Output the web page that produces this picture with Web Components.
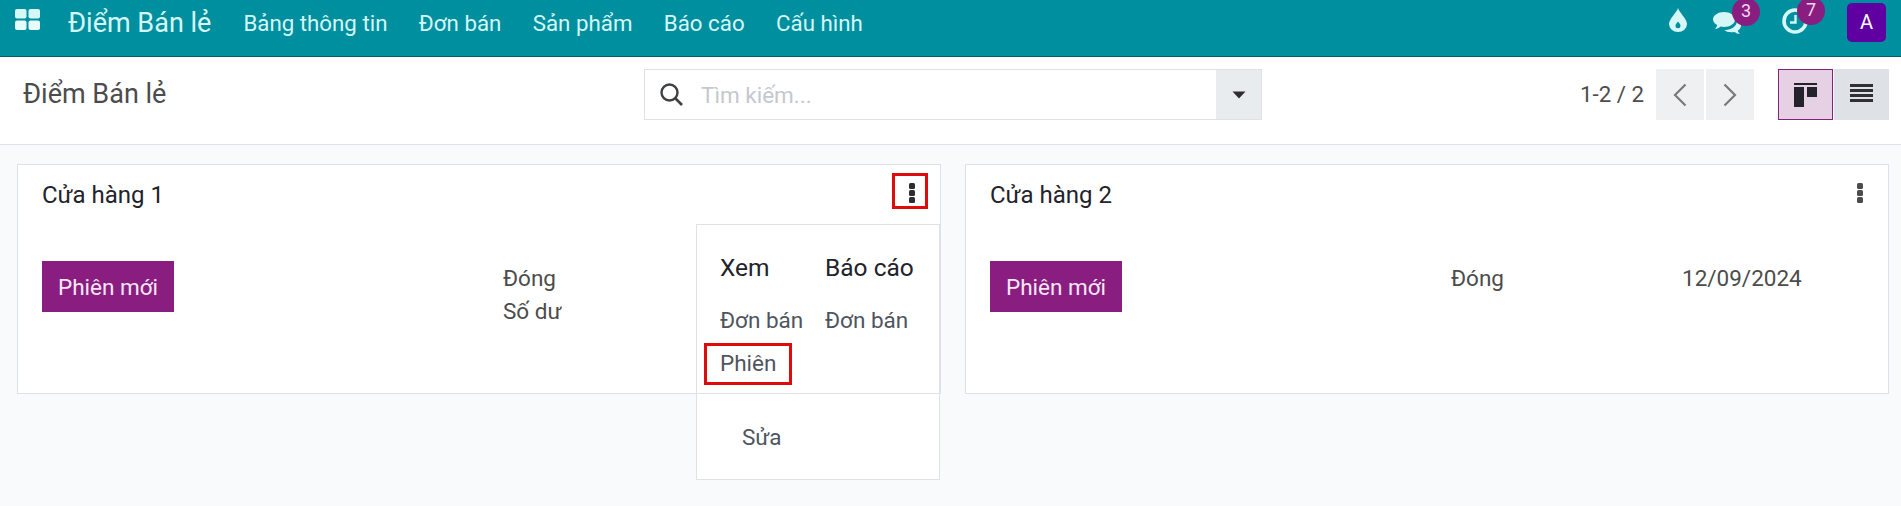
<!DOCTYPE html>
<html lang="vi">
<head>
<meta charset="utf-8">
<title>Điểm Bán lẻ</title>
<style>
html, body { margin: 0; height: 100%; }
body {
    background: #f9fafb;
    font-family: Roboto, "Noto Sans", sans-serif;
    color: #4c4c4c;
    overflow: hidden;
}
</style>
</head>
<body>
<app-navbar></app-navbar>
<control-panel></control-panel>
<kanban-board>
    <pos-card name="Cửa hàng 1" status="Đóng" balance="Số dư" open></pos-card>
    <pos-card name="Cửa hàng 2" status="Đóng" date="12/09/2024"></pos-card>
</kanban-board>

<script>
class AppNavbar extends HTMLElement {
    constructor(){
        super();
        this.attachShadow({mode: "open"});
        this.shadowRoot.innerHTML = `
<style>
:host{
    display: flex;
    height: 46px;
    padding: 0 15px 10px 15px;
    border-bottom: 1px solid #006068;
    background: #008f9e;
    color: #d5f7f7;
    font-size: 22.3px;
    align-items: center;
}
.apps{ width: 25px; height: 21px; align-self: flex-start; margin-top: 9px; }
.brand{ font-size: 27px; margin-left: 28px; margin-right: 32px; }
nav{ display: flex; gap: 31.4px; flex: 1; }
.systray{ display: flex; align-items: flex-start; height: 100%; }
.item{ position: relative; display: flex; }
.badge{
    position: absolute;
    width: 28px; height: 28px;
    border-radius: 50%;
    background: #8a1e80;
    color: #f3d6ee;
    font-size: 18px;
    line-height: 26px;
    text-align: center;
}
.avatar{
    width: 39px; height: 39px;
    margin-top: 3px;
    border-radius: 5px;
    background: #5f00a3;
    color: #fff;
    font-size: 20px;
    line-height: 39px;
    text-align: center;
}
</style>
<svg class="apps" viewBox="0 0 25 21">
    <rect x="0" y="0" width="11.5" height="9.5" rx="2" fill="#d5f7f7"/>
    <rect x="13.5" y="0" width="11.5" height="9.5" rx="2" fill="#d5f7f7"/>
    <rect x="0" y="11.5" width="11.5" height="9.5" rx="2" fill="#e8fbfb"/>
    <rect x="13.5" y="11.5" width="11.5" height="9.5" rx="2" fill="#e8fbfb"/>
</svg>
<span class="brand">Điểm Bán lẻ</span>
<nav>
    <span>Bảng thông tin</span>
    <span>Đơn bán</span>
    <span>Sản phẩm</span>
    <span>Báo cáo</span>
    <span>Cấu hình</span>
</nav>
<div class="systray">
    <div class="item" style="margin:8px 26px 0 0">
        <svg width="18" height="24" viewBox="0 0 18 24">
            <path fill-rule="evenodd" fill="#d5f7f7" d="M9 0C10 4 18 11 18 16A9 8 0 0 1 0 16C0 11 8 4 9 0ZM9 13.5C7.6 15.3 6.5 16.4 6.5 17.8A2.5 2.5 0 0 0 11.5 17.8C11.5 16.4 10.4 15.3 9 13.5Z"/>
        </svg>
    </div>
    <div class="item" style="margin:11px 41px 0 0">
        <svg width="28" height="23" viewBox="0 0 28 23">
            <path fill="#d5f7f7" d="M11 1C17 1 22 4.3 22 8.5C22 12.7 17 16 11 16C9.8 16 8.7 15.9 7.6 15.6C6 17 4 17.8 2 18C3.2 16.8 4 15.5 4.2 14C1.7 12.7 0 10.7 0 8.5C0 4.3 5 1 11 1Z"/>
            <path fill="#d5f7f7" d="M24 9.5C26.4 10.8 28 12.6 28 14.8C28 16.7 26.8 18.3 24.9 19.5C25 20.7 25.7 21.8 27 23C24.8 22.8 23 22 21.7 20.9C20.6 21.1 19.5 21.2 18.3 21.2C15.5 21.2 13 20.5 11.2 19.2C17.5 19.2 24 15.8 24 9.5Z"/>
        </svg>
        <span class="badge" style="left:19px;top:-13px">3</span>
    </div>
    <div class="item" style="margin:8px 39px 0 0">
        <svg width="26" height="26" viewBox="0 0 26 26">
            <circle cx="13" cy="13" r="11" fill="none" stroke="#d5f7f7" stroke-width="3.6"/>
            <path d="M13.5 7V14.5H8" fill="none" stroke="#d5f7f7" stroke-width="2.4"/>
        </svg>
        <span class="badge" style="left:15px;top:-11px">7</span>
    </div>
    <div class="avatar">A</div>
</div>`;
    }
}

class SearchBox extends HTMLElement {
    constructor(){
        super();
        this.attachShadow({mode: "open"});
        this.shadowRoot.innerHTML = `
<style>
:host{
    display: flex;
    width: 618px;
    height: 51px;
    box-sizing: border-box;
    border: 1px solid #dee2e6;
    background: #fff;
    align-items: center;
}
svg.search{ width: 23px; height: 23px; margin-left: 15px; }
.placeholder{ flex: 1; margin-left: 18px; font-size: 22.5px; color: #c4c8cf; }
.toggle{
    width: 45px;
    height: 100%;
    background: #e9ecef;
    display: flex;
    align-items: center;
    justify-content: center;
}
</style>
<svg class="search" viewBox="0 0 23 23">
    <circle cx="9.5" cy="9.5" r="8" fill="none" stroke="#3f4144" stroke-width="2.4"/>
    <path d="M15 15L22 22" stroke="#3f4144" stroke-width="2.6"/>
</svg>
<span class="placeholder">Tìm kiếm...</span>
<div class="toggle">
    <svg width="14" height="8" viewBox="0 0 14 8"><path d="M0.5 0.5H13.5L7 7.5Z" fill="#2b2d33"/></svg>
</div>`;
    }
}

class ControlPanel extends HTMLElement {
    constructor(){
        super();
        this.attachShadow({mode: "open"});
        this.shadowRoot.innerHTML = `
<style>
:host{
    display: flex;
    height: 88px;
    box-sizing: border-box;
    background: #fff;
    border-bottom: 1px solid #dee2e6;
    padding: 12px 12px 0 23px;
    align-items: flex-start;
    color: #4c4c4c;
}
.title{ width: 621px; font-size: 27px; line-height: 50px; }
.pager{ font-size: 22.3px; line-height: 51px; margin-left: auto; margin-right: 12px; }
.nav-btn, .view-btn{
    height: 51px;
    box-sizing: border-box;
    display: flex;
    align-items: center;
    justify-content: center;
}
.nav-btn{ width: 48px; background: #eff0f1; margin-right: 2px; }
.view-btn{ width: 55px; background: #dee2e6; }
.view-btn.active{ background: #e6d0e4; border: 1px solid #87207c; margin-left: 22px; }
.view-btn + .view-btn{ margin-left: 1px; }
.view-btn svg.lines{ margin-bottom: 3px; }
</style>
<span class="title">Điểm Bán lẻ</span>
<search-box></search-box>
<span class="pager">1-2 / 2</span>
<div class="nav-btn">
    <svg width="14" height="24" viewBox="0 0 14 24"><path d="M12.5 1.5L2 12L12.5 22.5" fill="none" stroke="#77797c" stroke-width="2.2"/></svg>
</div>
<div class="nav-btn">
    <svg width="14" height="24" viewBox="0 0 14 24"><path d="M1.5 1.5L12 12L1.5 22.5" fill="none" stroke="#77797c" stroke-width="2.2"/></svg>
</div>
<div class="view-btn active">
    <svg width="23" height="24" viewBox="0 0 23 24">
        <rect x="0" y="0" width="23" height="2" fill="#22232b"/>
        <rect x="0" y="4" width="10" height="20" fill="#22232b"/>
        <rect x="13" y="4" width="10" height="10" fill="#22232b"/>
    </svg>
</div>
<div class="view-btn">
    <svg class="lines" width="23" height="18" viewBox="0 0 23 18">
        <rect y="0" width="23" height="3" fill="#2e3036"/>
        <rect y="5" width="23" height="3" fill="#2e3036"/>
        <rect y="10" width="23" height="3" fill="#2e3036"/>
        <rect y="15" width="23" height="3" fill="#2e3036"/>
    </svg>
</div>`;
    }
}

class KanbanBoard extends HTMLElement {
    constructor(){
        super();
        this.attachShadow({mode: "open"});
        this.shadowRoot.innerHTML = `
<style>
:host{
    display: grid;
    grid-template-columns: 924px 924px;
    gap: 24px;
    padding: 19px 12px 0 17px;
}
</style>
<slot></slot>`;
    }
}

class CardMenu extends HTMLElement {
    constructor(){
        super();
        this.attachShadow({mode: "open"});
        this.shadowRoot.innerHTML = `
<style>
:host{
    position: absolute;
    left: 678px;
    top: 59px;
    width: 244px;
    height: 256px;
    box-sizing: border-box;
    border: 1px solid #dee2e6;
    background: #fff;
    font-size: 22.5px;
    color: #4f5560;
    z-index: 2;
}
.cols{
    display: grid;
    grid-template-columns: 105px 1fr;
    padding: 31px 0 0 23px;
    height: 169px;
    box-sizing: border-box;
    border-bottom: 1px solid #dee2e6;
}
.head{ font-size: 24.5px; color: #22232b; line-height: 24px; margin-bottom: 19px; white-space: nowrap; }
.row{ line-height: 43px; white-space: nowrap; }
.marked{
    box-sizing: border-box;
    width: 88px;
    height: 42px;
    margin: 1px 0 0 -16px;
    padding-left: 13px;
    border: 3px solid #e00b0b;
    line-height: 34px;
}
.edit{ padding: 31px 0 0 45px; line-height: 24px; }
</style>
<div class="cols">
    <div>
        <div class="head">Xem</div>
        <div class="row">Đơn bán</div>
        <div class="row marked">Phiên</div>
    </div>
    <div>
        <div class="head">Báo cáo</div>
        <div class="row">Đơn bán</div>
    </div>
</div>
<div class="edit">Sửa</div>`;
    }
}

class PosCard extends HTMLElement {
    constructor(){
        super();
        this.attachShadow({mode: "open"});
    }

    connectedCallback(){
        const open = this.hasAttribute("open");
        const balance = this.getAttribute("balance");
        const date = this.getAttribute("date");
        this.shadowRoot.innerHTML = `
<style>
:host{
    display: block;
    position: relative;
    height: 230px;
    box-sizing: border-box;
    background: #fff;
    border: 1px solid #dee2e6;
    padding: 0 24px;
    font-size: 22.5px;
    color: #4c4c4c;
}
.top{ display: flex; justify-content: space-between; align-items: center; height: 59px; }
.name{ font-size: 24px; color: #22232b; line-height: 24px; }
.kebab{
    width: 36px; height: 36px;
    box-sizing: border-box;
    margin-right: -12px;
    align-self: flex-start;
    margin-top: 8px;
    padding: 4px 0 0 4px;
    display: flex;
    align-items: center;
    justify-content: center;
}
.kebab.marked{ border: 3px solid #e00b0b; }
.kebab span, .kebab span::before, .kebab span::after{
    display: block;
    width: 6px; height: 6px;
    border-radius: 1.5px;
    background: #2b2d33;
}
.kebab span{ position: relative; }
.kebab span::before, .kebab span::after{ content: ""; position: absolute; left: 0; }
.kebab span::before{ top: -7px; }
.kebab span::after{ top: 7px; }
.kebab.plain span, .kebab.plain span::before, .kebab.plain span::after{ background: #4c4c4c; }
.body{ display: flex; padding-top: 37px; }
button{
    width: 132px;
    height: 51px;
    border: 0;
    padding: 0;
    background: #8a1e80;
    color: #f7e6f5;
    font: inherit;
}
.stats{
    display: grid;
    grid-template-columns: 231px auto;
    grid-auto-rows: 33px;
    margin-left: 329px;
    line-height: 34px;
}
</style>
<div class="top">
    <span class="name">${this.getAttribute("name")}</span>
    <div class="kebab ${open ? "marked" : "plain"}"><span></span></div>
</div>
<div class="body">
    <button>Phiên mới</button>
    <div class="stats">
        <span>${this.getAttribute("status")}</span><span>${date || ""}</span>
        ${balance ? `<span>${balance}</span>` : ""}
    </div>
</div>
${open ? "<card-menu></card-menu>" : ""}`;
    }
}

customElements.define("app-navbar", AppNavbar);
customElements.define("search-box", SearchBox);
customElements.define("control-panel", ControlPanel);
customElements.define("kanban-board", KanbanBoard);
customElements.define("card-menu", CardMenu);
customElements.define("pos-card", PosCard);
</script>
</body>
</html>
